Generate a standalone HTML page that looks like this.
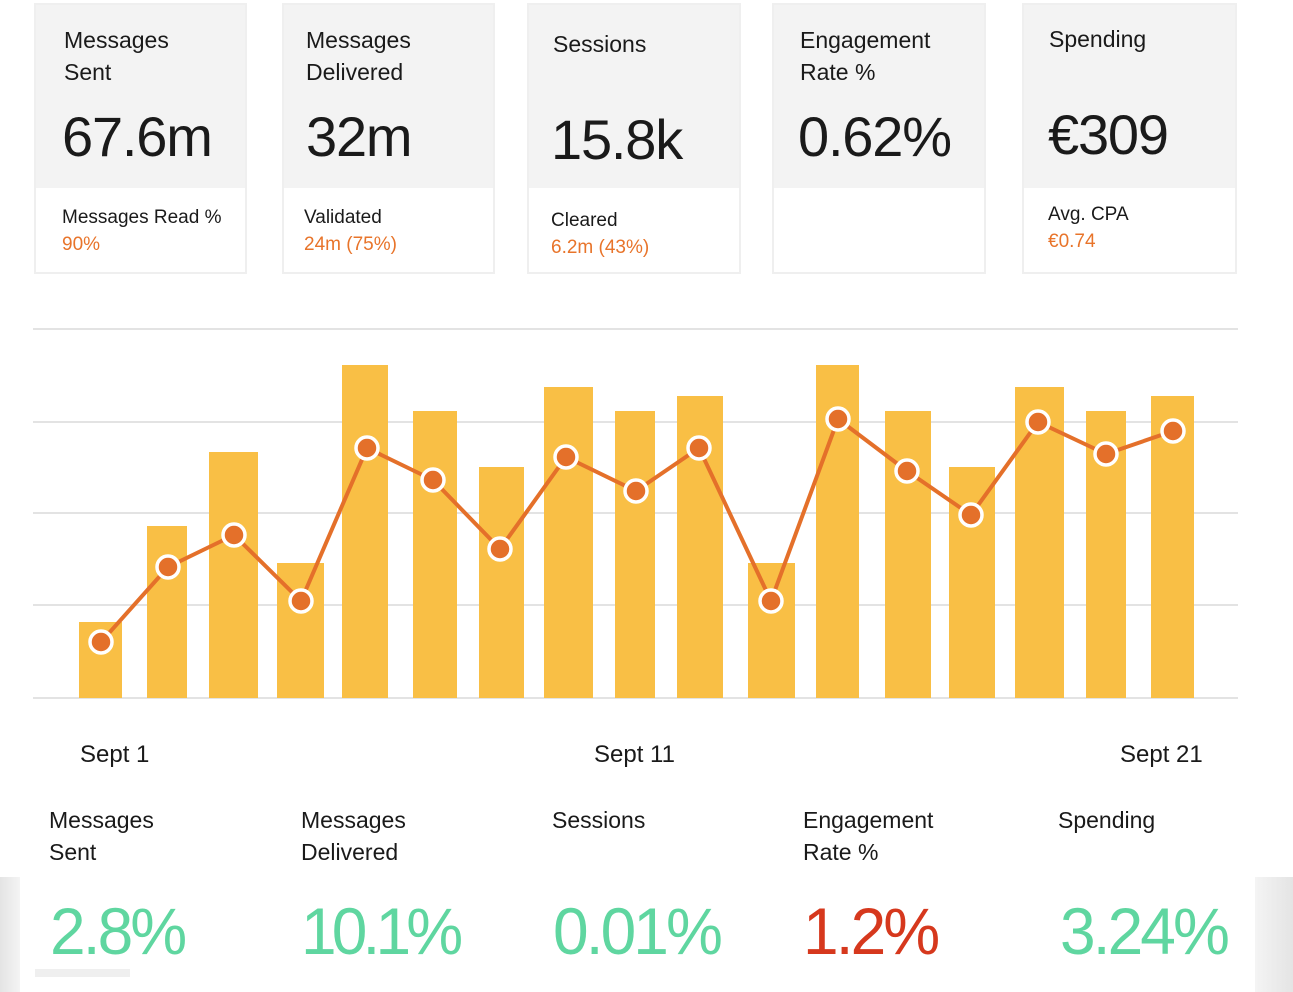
<!DOCTYPE html>
<html><head><style>
body{margin:0;width:1293px;height:992px;background:#fff;position:relative;overflow:hidden;font-family:"Liberation Sans",sans-serif;color:#1a1a1a}
.card{position:absolute;top:3px;height:271px;border:2px solid #efefef;background:#fff;box-sizing:border-box}
.card .top{height:183px;background:#f3f3f3;position:relative}
.card .t{position:absolute;left:28px;top:19px;font-size:23px;line-height:32px}
.card .v{position:absolute;left:26px;top:99px;font-size:56px;letter-spacing:-1.2px}
.card .s{position:absolute;left:26px;top:199px;font-size:19px;line-height:27px}
.card .s span{color:#e8742a}
.abs{position:absolute}
.lab{font-size:23px;line-height:32px}
.pct{font-size:66px;letter-spacing:-3px;color:#5fd6a0;transform:scaleX(0.97);transform-origin:left}
</style></head><body>
<div class="card" style="left:34px;width:213px"><div class="top"><div class="t">Messages<br>Sent</div><div class="v">67.6m</div></div><div class="s">Messages Read %<br><span>90%</span></div></div>
<div class="card" style="left:282px;width:213px"><div class="top"><div class="t" style="left:22px">Messages<br>Delivered</div><div class="v" style="left:22px">32m</div></div><div class="s" style="left:20px">Validated<br><span>24m (75%)</span></div></div>
<div class="card" style="left:527px;width:214px"><div class="top"><div class="t" style="left:24px;top:23px">Sessions</div><div class="v" style="left:22px;top:102px">15.8k</div></div><div class="s" style="left:22px;top:202px">Cleared<br><span>6.2m (43%)</span></div></div>
<div class="card" style="left:772px;width:214px"><div class="top"><div class="t" style="left:26px">Engagement<br>Rate %</div><div class="v" style="left:24px">0.62%</div></div></div>
<div class="card" style="left:1022px;width:215px"><div class="top"><div class="t" style="left:25px;top:18px">Spending</div><div class="v" style="left:24px;top:97px">€309</div></div><div class="s" style="left:24px;top:196px">Avg. CPA<br><span>€0.74</span></div></div>

<svg class="abs" style="left:0;top:0" width="1293" height="720">
<g stroke="#e3e3e3" stroke-width="2"><line x1="33" y1="329" x2="1238" y2="329"/><line x1="33" y1="422" x2="1238" y2="422"/><line x1="33" y1="513" x2="1238" y2="513"/><line x1="33" y1="605" x2="1238" y2="605"/><line x1="33" y1="698" x2="1238" y2="698"/></g>
<g fill="#f9bf45">
<rect x="79" y="622" width="43" height="76"/><rect x="147" y="526" width="40" height="172"/><rect x="209" y="452" width="49" height="246"/><rect x="277" y="563" width="47" height="135"/><rect x="342" y="365" width="46" height="333"/><rect x="413" y="411" width="44" height="287"/><rect x="479" y="467" width="45" height="231"/><rect x="544" y="387" width="49" height="311"/><rect x="615" y="411" width="40" height="287"/><rect x="677" y="396" width="46" height="302"/><rect x="748" y="563" width="47" height="135"/><rect x="816" y="365" width="43" height="333"/><rect x="885" y="411" width="46" height="287"/><rect x="949" y="467" width="46" height="231"/><rect x="1015" y="387" width="49" height="311"/><rect x="1086" y="411" width="40" height="287"/><rect x="1151" y="396" width="43" height="302"/>
</g>
<polyline fill="none" stroke="#e4702a" stroke-width="4" points="101,642 168,567 234,535 301,601 367,448 433,480 500,549 566,457 636,491 699,448 771,601 838,419 907,471 971,515 1038,422 1106,454 1173,431"/>
<g fill="#e4702a" stroke="#fff" stroke-width="3.5">
<circle cx="101" cy="642" r="11"/><circle cx="168" cy="567" r="11"/><circle cx="234" cy="535" r="11"/><circle cx="301" cy="601" r="11"/><circle cx="367" cy="448" r="11"/><circle cx="433" cy="480" r="11"/><circle cx="500" cy="549" r="11"/><circle cx="566" cy="457" r="11"/><circle cx="636" cy="491" r="11"/><circle cx="699" cy="448" r="11"/><circle cx="771" cy="601" r="11"/><circle cx="838" cy="419" r="11"/><circle cx="907" cy="471" r="11"/><circle cx="971" cy="515" r="11"/><circle cx="1038" cy="422" r="11"/><circle cx="1106" cy="454" r="11"/><circle cx="1173" cy="431" r="11"/>
</g></svg>

<div class="abs lab" style="left:80px;top:739px;font-size:24px">Sept 1</div>
<div class="abs lab" style="left:594px;top:739px;font-size:24px">Sept 11</div>
<div class="abs lab" style="left:1120px;top:739px;font-size:24px">Sept 21</div>

<div class="abs" style="left:0;top:877px;width:20px;height:115px;background:linear-gradient(90deg,#e4e4e4,#f4f4f4)"></div>
<div class="abs" style="left:1255px;top:877px;width:38px;height:115px;background:linear-gradient(90deg,#f4f4f4,#e4e4e4)"></div>
<div class="abs" style="left:35px;top:969px;width:95px;height:8px;background:#efefef"></div>

<div class="abs lab" style="left:49px;top:804px">Messages<br>Sent</div>
<div class="abs lab" style="left:301px;top:804px">Messages<br>Delivered</div>
<div class="abs lab" style="left:552px;top:804px">Sessions</div>
<div class="abs lab" style="left:803px;top:804px">Engagement<br>Rate %</div>
<div class="abs lab" style="left:1058px;top:804px">Spending</div>

<div class="abs pct" style="left:50px;top:893px">2.8%</div>
<div class="abs pct" style="left:301px;top:893px;letter-spacing:-5px">10.1%</div>
<div class="abs pct" style="left:553px;top:893px">0.01%</div>
<div class="abs pct" style="left:803px;top:893px;color:#d6381d">1.2%</div>
<div class="abs pct" style="left:1060px;top:893px">3.24%</div>
</body></html>
